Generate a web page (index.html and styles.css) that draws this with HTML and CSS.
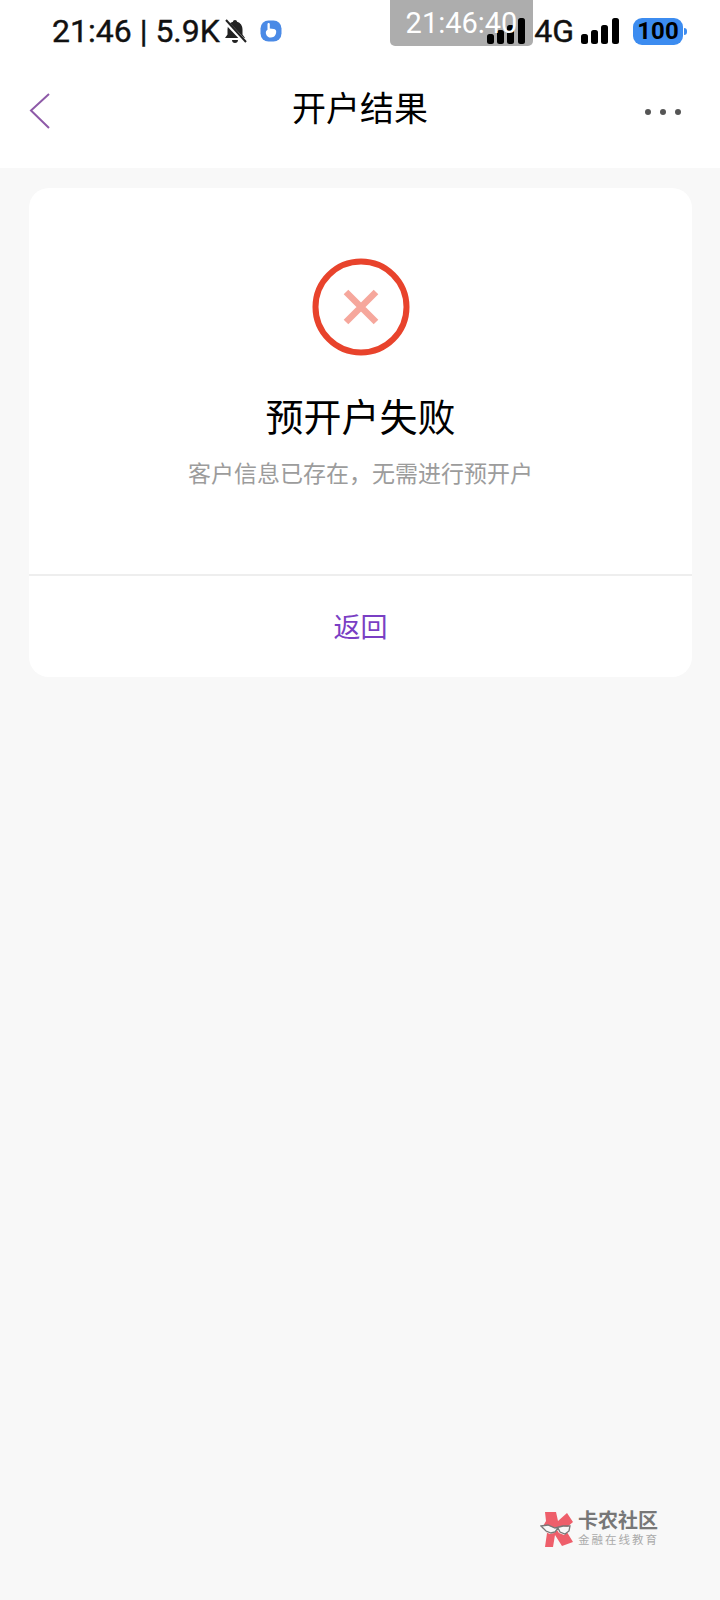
FILE: index.html
```html
<!DOCTYPE html>
<html lang="zh-CN">
<head>
  <meta charset="UTF-8" />
  <meta name="viewport" content="width=device-width, initial-scale=1.0" />
  <title>开户结果</title>
  <link rel="stylesheet" href="styles.css">
</head>
<body>
  <div class="top">
    <!-- Clock pill sits behind the signal bars, its digits in front of them -->
    <div class="clock-box"></div>

    <!-- Status bar -->
    <div class="status">
      <div class="status-left">
        <span class="status-text">21:46 | 5.9K</span>
        <svg class="bell" width="24" height="26" viewBox="0 0 24 26">
          <path d="M12 2c1.200 0 2 .8 2 1.800 3.600 1 5.500 4 5.500 7.700v5l2.500 3.500H2l2.500-3.500v-5C4.500 7.800 6.400 4.800 10 3.800 10 2.800 10.800 2 12 2zM9 22h6c0 1.800-1.300 3-3 3s-3-1.200-3-3z" fill="#222"/>
          <path d="M2 3l20 21" stroke="#fff" stroke-width="4"/>
          <path d="M3 2l20 22" stroke="#222" stroke-width="2"/>
        </svg>
        <svg class="touch" width="22" height="22" viewBox="0 0 22 22">
          <rect x="0.500" y="0.500" width="21" height="21" rx="8" fill="#4a8ae6"/>
          <path d="M7.500 4c0-1.500 2.300-1.500 2.300 0v4.500l4 .6c1.600.3 2.400 1.200 2.400 2.500 0 3.200-1.700 6-5.200 6-2.600 0-4.700-1.500-5.100-4.200-.2-1.500.2-2.900 1.600-3.600z" fill="#fff"/>
        </svg>
      </div>
      <div class="status-right">
        <svg width="38" height="26" viewBox="0 0 38 26">
          <rect x="0" y="16" width="7" height="10" rx="2.500"/>
          <rect x="10" y="12" width="7" height="14" rx="2.500"/>
          <rect x="20" y="7" width="7" height="19" rx="2.500"/>
          <rect x="31" y="0" width="7" height="26" rx="2.500"/>
        </svg>
        <span class="status-text net">4G</span>
        <svg width="38" height="26" viewBox="0 0 38 26">
          <rect x="0" y="16" width="7" height="10" rx="2.500"/>
          <rect x="10" y="12" width="7" height="14" rx="2.500"/>
          <rect x="20" y="7" width="7" height="19" rx="2.500"/>
          <rect x="31" y="0" width="7" height="26" rx="2.500"/>
        </svg>
        <span class="battery">100</span>
        <span class="battery-tip"></span>
      </div>
    </div>

    <div class="clock-text">21:46:40</div>

    <!-- Title bar -->
    <div class="nav">
      <svg class="back" width="24" height="38" viewBox="0 0 24 38">
        <path d="M21 2L3 18.500 21 36" fill="none" stroke="#8e5aa8" stroke-width="2"/>
      </svg>
      <h1>开户结果</h1>
      <div class="more"><i></i><i></i><i></i></div>
    </div>
  </div>

  <div class="card">
    <div class="result">
      <svg class="fail-icon" width="98" height="98" viewBox="0 0 98 98">
        <circle cx="49" cy="49" r="45.500" fill="none" stroke="#e8432c" stroke-width="6"/>
        <path d="M34 34l30 30M64 34L34 64" stroke="#f6a79c" stroke-width="6.500"/>
      </svg>
      <h2>预开户失败</h2>
      <p>客户信息已存在，无需进行预开户</p>
    </div>
    <div class="card-btn">返回</div>
  </div>

  <!-- Watermark -->
  <div class="mark">
    <svg width="36" height="36" viewBox="0 0 36 36">
      <path d="M5 1h11l2 9 9-8 6 9-8 7 8 13-11 4-7-11-2 12H5l2-14-5-5 4-7z" fill="#ee5f6b"/>
      <path d="M1 15l6-1 5 2 4 1 7-2 6 1-1 5-4 3-5-2-2-3-3 3-4 1-5-2-2-2z" fill="#f8f8f8"/>
      <path d="M1 15l7-1 7 3 8-2 7 0-1 5-4 3-5-2-2-4-3 4-4 1-5-2z" fill="none" stroke="#777" stroke-width="1.300"/>
    </svg>
    <div class="mark-text">
      <b>卡农社区</b>
      <span>金融在线教育</span>
    </div>
  </div>
</body>
</html>
```

FILE: styles.css
```css
* {
  box-sizing: border-box;
}

html, body {
  margin: 0;
  height: 100%;
}

body {
  position: relative;
  height: 1600px;
  overflow: hidden;
  background-color: #f8f8f8;
  color: #000;
  font-family: Roboto, "Noto Sans CJK SC", sans-serif;
}

.top {
  position: relative;
  height: 168px;
  background-color: #fff;
}

/* Status bar */
.status {
  position: relative;
  display: flex;
  justify-content: space-between;
  align-items: center;
  height: 62px;
  padding: 0 33px 0 52px;
}

.status-left, .status-right {
  display: flex;
  align-items: center;
}

.status-text {
  font-size: 32px;
  font-weight: 400;
  color: #111;
  -webkit-text-stroke: 0.4px #111;
}

.bell {
  margin-left: 3px;
}

.touch {
  margin-left: 13px;
}

.net {
  margin: 0 7px 0 9px;
}

.battery {
  width: 50px;
  height: 27px;
  margin-left: 14px;
  border-radius: 9px;
  background-color: #3c8cf0;
  font-size: 24px;
  font-weight: 700;
  line-height: 27px;
  text-align: center;
}

.battery-tip {
  width: 3px;
  height: 7px;
  margin-left: 1px;
  border-radius: 0 3px 3px 0;
  background-color: #3c8cf0;
}

.clock-box, .clock-text {
  position: absolute;
  top: 0;
  left: 390px;
  width: 143px;
  height: 46px;
}

.clock-box {
  border-radius: 0 0 5px 5px;
  background-color: #adadad;
}

.clock-text {
  color: #fff;
  font-size: 29px;
  line-height: 47px;
  text-align: center;
}

/* Title bar */
.nav {
  position: relative;
  display: flex;
  justify-content: center;
  align-items: center;
  height: 92px;
}

.nav h1 {
  margin: 0 0 4px;
  font-size: 34px;
  font-weight: 400;
}

.back {
  position: absolute;
  left: 28px;
  top: 30px;
}

.more {
  position: absolute;
  right: 39px;
  top: 47px;
  display: flex;
  gap: 9px;
}

.more i {
  width: 6px;
  height: 6px;
  border-radius: 50%;
  background-color: #555;
}

/* Result card */
.card {
  margin: 20px 28px 0 29px;
  border-radius: 20px;
  background-color: #fff;
}

.result {
  display: flex;
  flex-direction: column;
  align-items: center;
  height: 388px;
  padding-top: 70px;
  border-bottom: 2px solid #eeeeee;
}

.result h2 {
  margin: 37px 0 0;
  font-size: 38px;
  font-weight: 400;
  line-height: 50px;
}

.result p {
  margin: 16px 0 0;
  color: #9c9c9c;
  font-size: 23px;
  line-height: 32px;
}

.card-btn {
  height: 101px;
  color: #7a3fc4;
  font-size: 27px;
  line-height: 104px;
  text-align: center;
}

/* Watermark */
.mark {
  position: absolute;
  left: 540px;
  top: 1510px;
  display: flex;
  align-items: center;
  gap: 2px;
}

.mark-text {
  display: flex;
  flex-direction: column;
  color: #777;
}

.mark-text b {
  font-size: 20px;
  line-height: 23px;
}

.mark-text span {
  color: #aaa;
  font-size: 11.500px;
  letter-spacing: 2px;
  line-height: 14px;
}
```
